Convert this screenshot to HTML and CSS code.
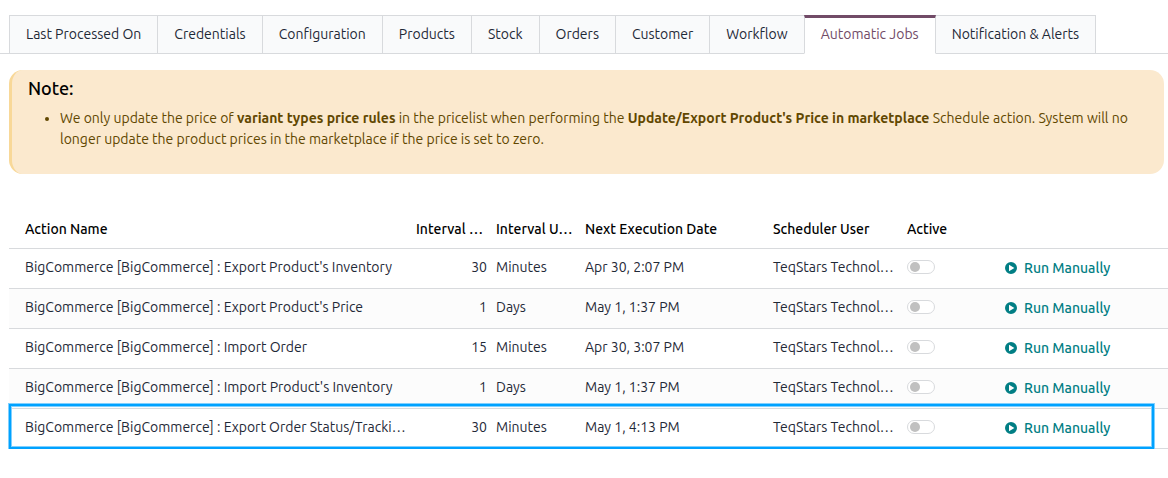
FILE: index.html
```html
<!DOCTYPE html>
<html lang="en">
<head>
    <meta charset="UTF-8">
    <meta name="viewport" content="width=device-width, initial-scale=1.0">
    <title>Automatic Jobs</title>
    <link rel="stylesheet" href="styles.css">
</head>
<body>
    <nav class="tabs">
        <a href="#" class="tab">Last Processed On</a>
        <a href="#" class="tab">Credentials</a>
        <a href="#" class="tab">Configuration</a>
        <a href="#" class="tab">Products</a>
        <a href="#" class="tab">Stock</a>
        <a href="#" class="tab">Orders</a>
        <a href="#" class="tab">Customer</a>
        <a href="#" class="tab">Workflow</a>
        <a href="#" class="tab active">Automatic Jobs</a>
        <a href="#" class="tab">Notification &amp; Alerts</a>
    </nav>

    <div class="note">
        <h4>Note:</h4>
        <ul>
            <li>We only update the price of <b>variant types price rules</b> in the pricelist when performing the <b>Update/Export Product's Price in marketplace</b> Schedule action. System will no longer update the product prices in the marketplace if the price is set to zero.</li>
        </ul>
    </div>

    <div class="jobs">
        <table class="job-table">
            <colgroup>
                <col>
                <col class="col-number">
                <col class="col-unit">
                <col class="col-date">
                <col class="col-user">
                <col class="col-active">
                <col class="col-run">
            </colgroup>
            <thead>
                <tr>
                    <th>Action Name</th>
                    <th>Interval Number</th>
                    <th>Interval Unit</th>
                    <th>Next Execution Date</th>
                    <th>Scheduler User</th>
                    <th>Active</th>
                    <th></th>
                </tr>
            </thead>
            <tbody id="jobRows"></tbody>
        </table>
        <div class="highlight"></div>
    </div>

    <script src="script.js"></script>
</body>
</html>
```
FILE: styles.css
```css
body {
    font-family: "Ubuntu", "Noto Sans", sans-serif;
    font-size: 14px;
    line-height: 21px;
    margin: 0;
    padding: 15px 0 0;
    background-color: #fff;
    color: #1f2937;
}

/* Tabs */
.tabs {
    display: flex;
    padding-left: 9px;
    border-bottom: 1px solid #d8dadd;
}

.tab {
    padding: 8px 16px;
    margin: 0 -1px -1px 0;
    border: 1px solid #d8dadd;
    background-color: #f9fafb;
    color: #1f2937;
    text-decoration: none;
    white-space: nowrap;
}

.tab.active {
    position: relative;
    padding-top: 6px;
    border-top: 3px solid #714b67;
    border-bottom-color: #fff;
    background-color: #fff;
    color: #714b67;
}

/* Note */
.note {
    margin: 16px 4px 0 9px;
    padding: 8px 16px 24px;
    border-left: 3px solid #f8d898;
    border-radius: 14px;
    background-color: #fbe9ce;
    color: #614700;
}

.note h4 {
    margin: 0 0 10px;
    font-size: 18px;
    line-height: 20px;
    font-weight: 500;
    color: #000;
}

.note ul {
    margin: 0;
    padding-left: 32px;
}

/* Job list */
.jobs {
    position: relative;
    margin: 35px 0 0 9px;
}

.job-table {
    width: 100%;
    table-layout: fixed;
    border-collapse: separate;
    border-spacing: 0;
}

.col-number { width: 80px; }
.col-unit { width: 89px; }
.col-date { width: 188px; }
.col-user { width: 134px; }
.col-active { width: 98px; }
.col-run { width: 168px; }

.job-table th,
.job-table td {
    height: 37px;
    padding: 0 5px 2px;
    border-bottom: 1px solid #d8dadd;
    text-align: left;
    overflow: hidden;
    text-overflow: ellipsis;
    white-space: nowrap;
}

.job-table th {
    padding-top: 2px;
    padding-bottom: 0;
    font-weight: 500;
    color: #000;
}

.job-table th:first-child,
.job-table td:first-child {
    padding-left: 16px;
}

.job-table td.number {
    padding-right: 4px;
    text-align: right;
}

.job-table tbody tr:nth-child(even) {
    background-color: #fcfcfc;
}

.switch {
    appearance: none;
    display: block;
    width: 28px;
    height: 14px;
    margin: 0 0 1px;
    padding: 1px 2px;
    box-sizing: border-box;
    border: 1px solid #d8dadd;
    border-radius: 7px;
    background-color: #fff;
}

.switch::before {
    content: "";
    display: block;
    width: 10px;
    height: 10px;
    border-radius: 50%;
    background-color: #c0c0c0;
}

.switch:checked::before {
    margin-left: auto;
    background-color: #017e84;
}

.job-table td.run {
    padding-bottom: 0;
}

.run-btn {
    display: flex;
    align-items: center;
    gap: 7px;
    padding: 0;
    border: none;
    background: none;
    color: #017e84;
    font: inherit;
    font-weight: 500;
    cursor: pointer;
}

.run-btn svg {
    width: 12px;
    height: 12px;
    margin-bottom: 1px;
}

/* Frame over the last row */
.highlight {
    position: absolute;
    left: 0;
    right: 14px;
    bottom: 0;
    height: 41px;
    border: 2px solid #00a2ff;
    box-shadow: 0 0 0 1px #80d0ff, inset 0 0 0 1px #80d0ff;
    pointer-events: none;
}
```
FILE: script.js
```js
const jobs = [
    { name: "Export Product's Inventory", number: 30, unit: 'Minutes', date: 'Apr 30, 2:07 PM' },
    { name: "Export Product's Price", number: 1, unit: 'Days', date: 'May 1, 1:37 PM' },
    { name: 'Import Order', number: 15, unit: 'Minutes', date: 'Apr 30, 3:07 PM' },
    { name: "Import Product's Inventory", number: 1, unit: 'Days', date: 'May 1, 1:37 PM' },
    { name: 'Export Order Status/Tracking Information', number: 30, unit: 'Minutes', date: 'May 1, 4:13 PM' }
];

const jobRows = document.getElementById('jobRows');

// Render the job rows
jobs.forEach(job => {
    const row = document.createElement('tr');
    row.innerHTML = `
        <td>BigCommerce [BigCommerce] : ${job.name}</td>
        <td class="number">${job.number}</td>
        <td>${job.unit}</td>
        <td>${job.date}</td>
        <td>TeqStars Technologies</td>
        <td><input type="checkbox" class="switch" aria-label="Active"></td>
        <td class="run">
            <button type="button" class="run-btn">
                <svg viewBox="0 0 12 12"><path fill="currentColor" fill-rule="evenodd" d="M6 0a6 6 0 1 1 0 12a6 6 0 0 1 0-12zM4 2.8v6.4l5.4-3.2z"/></svg>
                Run Manually
            </button>
        </td>
    `;
    jobRows.appendChild(row);
});
```
